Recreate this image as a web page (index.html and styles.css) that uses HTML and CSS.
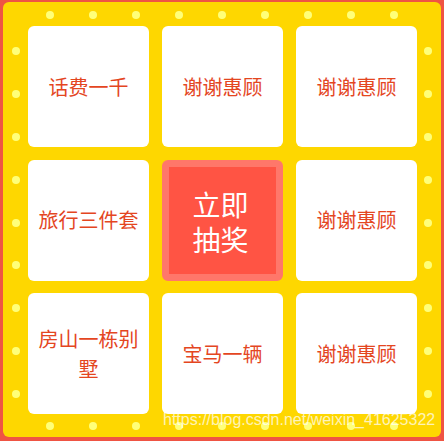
FILE: index.html
```html
<!DOCTYPE html>
<html lang="zh">
<head>
<meta charset="utf-8">
<link rel="stylesheet" href="styles.css">
</head>
<body>
<div class="board">
  <div class="lights lights-top"><i></i><i></i><i></i><i></i><i></i><i></i><i></i><i></i><i></i></div>
  <div class="lights lights-bottom"><i></i><i></i><i></i><i></i><i></i><i></i><i></i><i></i><i></i></div>
  <div class="lights lights-left"><i></i><i></i><i></i><i></i><i></i><i></i><i></i><i></i><i></i></div>
  <div class="lights lights-right"><i></i><i></i><i></i><i></i><i></i><i></i><i></i><i></i><i></i></div>
  <div class="grid">
    <div class="cell"><span>话费一千</span></div>
    <div class="cell"><span>谢谢惠顾</span></div>
    <div class="cell"><span>谢谢惠顾</span></div>
    <div class="cell"><span>旅行三件套</span></div>
    <div class="cell start"><span>立即抽奖</span></div>
    <div class="cell"><span>谢谢惠顾</span></div>
    <div class="cell"><span>房山一栋别墅</span></div>
    <div class="cell"><span>宝马一辆</span></div>
    <div class="cell"><span>谢谢惠顾</span></div>
  </div>
</div>
<div class="watermark">https://blog.csdn.net/weixin_41625322</div>
</body>
</html>
```

FILE: styles.css
```css
html, body {
  margin: 0;
  padding: 0;
}
body {
  width: 444px;
  height: 441px;
  background: #ef5443;
  position: relative;
  overflow: hidden;
  font-family: "Noto Sans CJK SC", "Noto Sans", sans-serif;
}
.board {
  position: relative;
  box-sizing: border-box;
  margin: 2px 3px 0 3px;
  width: 438px;
  height: 435px;
  border-radius: 6px;
  background: #fed700;
  padding: 24px 0 0 25px;
}
.grid {
  display: grid;
  grid-template-columns: 121px 121px 121px;
  grid-template-rows: 121px 121px 121px;
  column-gap: 13px;
  row-gap: 12.5px;
}
.cell {
  background: #fff;
  border-radius: 6px;
  display: flex;
  align-items: center;
  justify-content: center;
  text-align: center;
  padding: 0 10px;
  box-sizing: border-box;
  color: #e4461f;
  font-size: 20px;
  line-height: 30px;
}
.cell.start {
  background: #ff5444;
  border: 7px solid #ff776a;
  color: #fff;
  font-size: 28px;
  line-height: 35px;
  padding: 0;
}
.cell.start span {
  display: block;
  width: 60px;
  margin-top: 4px;
  margin-left: -4px;
}
.lights {
  position: absolute;
  display: flex;
  justify-content: space-between;
}
.lights i {
  display: block;
  width: 8px;
  height: 8px;
  border-radius: 50%;
  background: #ffff7a;
}
.lights-top, .lights-bottom {
  left: 43px;
  width: 352px;
  height: 8px;
}
.lights-top { top: 9px; }
.lights-bottom { top: 420px; }
.lights-left, .lights-right {
  flex-direction: column;
  top: 45px;
  height: 351px;
  width: 8px;
}
.lights-left { left: 9px; }
.lights-right { left: 421px; }
.watermark {
  position: absolute;
  left: 163px;
  top: 411px;
  font-family: "Liberation Sans", Arial, sans-serif;
  font-size: 16px;
  color: rgba(255, 255, 255, 0.72);
  white-space: nowrap;
}
```
